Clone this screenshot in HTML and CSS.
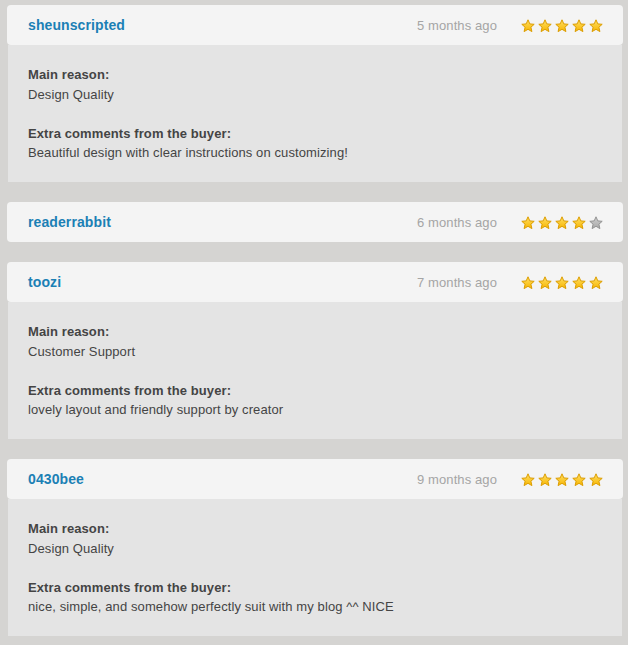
FILE: index.html
```html
<!DOCTYPE html>
<html lang="en">
<head>
    <meta charset="UTF-8">
    <title>Reviews</title>
    <link rel="stylesheet" href="styles.css">
</head>
<body>
    <svg width="0" height="0" class="defs">
        <defs>
            <linearGradient id="gold" x1="0" y1="0" x2="0" y2="1">
                <stop offset="0" stop-color="#ffe066"/>
                <stop offset="1" stop-color="#f7b500"/>
            </linearGradient>
            <linearGradient id="grey" x1="0" y1="0" x2="0" y2="1">
                <stop offset="0" stop-color="#cfcfcf"/>
                <stop offset="1" stop-color="#a8a8a8"/>
            </linearGradient>
            <symbol id="star" viewBox="0 0 14 14">
                <path d="M7 0.8 L8.8 4.9 L13.2 5.3 L9.9 8.2 L10.9 12.6 L7 10.3 L3.1 12.6 L4.1 8.2 L0.8 5.3 L5.2 4.9 Z" stroke-width="1" stroke-linejoin="round"/>
            </symbol>
        </defs>
    </svg>

    <div class="review">
        <div class="review-head">
            <a class="buyer">sheunscripted</a>
            <span class="date">5 months ago</span>
            <span class="stars">
                <svg class="star on"><use href="#star"/></svg>
                <svg class="star on"><use href="#star"/></svg>
                <svg class="star on"><use href="#star"/></svg>
                <svg class="star on"><use href="#star"/></svg>
                <svg class="star on"><use href="#star"/></svg>
            </span>
        </div>
        <div class="review-body">
            <p><strong>Main reason:</strong><br>Design Quality</p>
            <p><strong>Extra comments from the buyer:</strong><br>Beautiful design with clear instructions on customizing!</p>
        </div>
    </div>

    <div class="review">
        <div class="review-head">
            <a class="buyer">readerrabbit</a>
            <span class="date">6 months ago</span>
            <span class="stars">
                <svg class="star on"><use href="#star"/></svg>
                <svg class="star on"><use href="#star"/></svg>
                <svg class="star on"><use href="#star"/></svg>
                <svg class="star on"><use href="#star"/></svg>
                <svg class="star off"><use href="#star"/></svg>
            </span>
        </div>
    </div>

    <div class="review">
        <div class="review-head">
            <a class="buyer">toozi</a>
            <span class="date">7 months ago</span>
            <span class="stars">
                <svg class="star on"><use href="#star"/></svg>
                <svg class="star on"><use href="#star"/></svg>
                <svg class="star on"><use href="#star"/></svg>
                <svg class="star on"><use href="#star"/></svg>
                <svg class="star on"><use href="#star"/></svg>
            </span>
        </div>
        <div class="review-body">
            <p><strong>Main reason:</strong><br>Customer Support</p>
            <p><strong>Extra comments from the buyer:</strong><br>lovely layout and friendly support by creator</p>
        </div>
    </div>

    <div class="review">
        <div class="review-head">
            <a class="buyer">0430bee</a>
            <span class="date">9 months ago</span>
            <span class="stars">
                <svg class="star on"><use href="#star"/></svg>
                <svg class="star on"><use href="#star"/></svg>
                <svg class="star on"><use href="#star"/></svg>
                <svg class="star on"><use href="#star"/></svg>
                <svg class="star on"><use href="#star"/></svg>
            </span>
        </div>
        <div class="review-body">
            <p><strong>Main reason:</strong><br>Design Quality</p>
            <p><strong>Extra comments from the buyer:</strong><br>nice, simple, and somehow perfectly suit with my blog ^^ NICE</p>
        </div>
    </div>
</body>
</html>
```

FILE: styles.css
```css
body {
    margin: 0;
    padding: 5px 5px 0 7px;
    background-color: #d5d4d2;
    font-family: "Liberation Sans", Arial, sans-serif;
    font-size: 13px;
    line-height: 1.5;
    letter-spacing: 0.1px;
    color: #444;
}
.defs {
    position: absolute;
}
.review {
    margin-bottom: 20px;
}
.review-head {
    display: flex;
    align-items: center;
    height: 40px;
    padding: 1px 20px 0 21px;
    box-sizing: border-box;
    background-color: #f4f4f4;
    border-radius: 4px;
}
.buyer {
    flex: 1;
    font-size: 14px;
    font-weight: bold;
    color: #1b80b5;
}
.date {
    color: #a5a5a5;
}
.stars {
    display: flex;
    margin-left: 21px;
}
.star {
    width: 14px;
    height: 14px;
    margin-left: 3px;
}
.star.on {
    fill: url(#gold);
    stroke: #dc9d00;
}
.star.off {
    fill: url(#grey);
    stroke: #939393;
}
.review-body {
    display: flow-root;
    margin: 0 1px;
    padding: 20px 20px 0;
    background-color: #e4e4e4;
}
.review-body p {
    margin: 0 0 1.5em;
}
```
